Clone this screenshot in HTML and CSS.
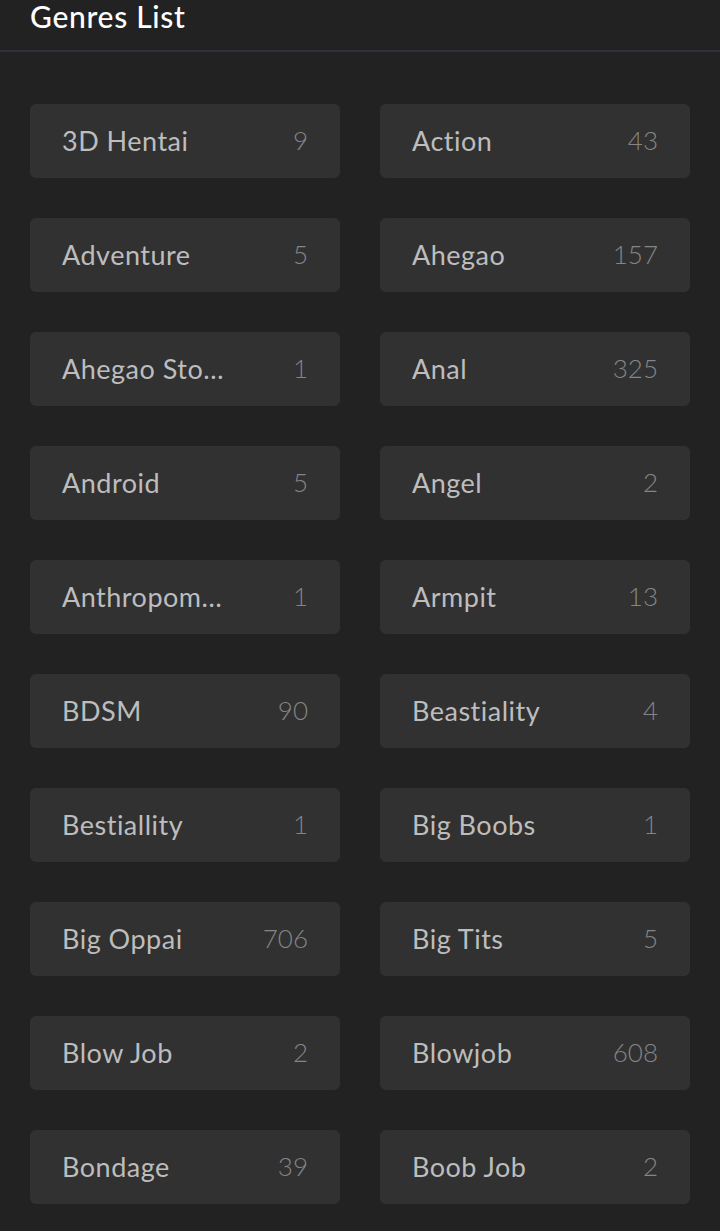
FILE: index.html
```html
<!DOCTYPE html>
<html>
<head>
<meta charset="utf-8">
<link rel="stylesheet" href="styles.css">
</head>
<body>
<header class="head"><h1 class="title">Genres List</h1></header>
<main class="grid">
  <a class="card"><span class="name">3D Hentai</span><span class="count">9</span></a>
  <a class="card"><span class="name">Action</span><span class="count">43</span></a>
  <a class="card"><span class="name">Adventure</span><span class="count">5</span></a>
  <a class="card"><span class="name">Ahegao</span><span class="count">157</span></a>
  <a class="card"><span class="name">Ahegao Stockings</span><span class="count">1</span></a>
  <a class="card"><span class="name">Anal</span><span class="count">325</span></a>
  <a class="card"><span class="name">Android</span><span class="count">5</span></a>
  <a class="card"><span class="name">Angel</span><span class="count">2</span></a>
  <a class="card"><span class="name">Anthropomorphic</span><span class="count">1</span></a>
  <a class="card"><span class="name">Armpit</span><span class="count">13</span></a>
  <a class="card"><span class="name">BDSM</span><span class="count">90</span></a>
  <a class="card"><span class="name">Beastiality</span><span class="count">4</span></a>
  <a class="card"><span class="name">Bestiallity</span><span class="count">1</span></a>
  <a class="card"><span class="name">Big Boobs</span><span class="count">1</span></a>
  <a class="card"><span class="name">Big Oppai</span><span class="count">706</span></a>
  <a class="card"><span class="name">Big Tits</span><span class="count">5</span></a>
  <a class="card"><span class="name">Blow Job</span><span class="count">2</span></a>
  <a class="card"><span class="name">Blowjob</span><span class="count">608</span></a>
  <a class="card"><span class="name">Bondage</span><span class="count">39</span></a>
  <a class="card"><span class="name">Boob Job</span><span class="count">2</span></a>
</main>
</body>
</html>
```
FILE: styles.css
```css
html, body {
  margin: 0;
  padding: 0;
  background: #222222;
  font-family: Lato, "Open Sans", sans-serif;
}
.head {
  height: 52px;
  border-bottom: 2px solid #31313a;
  box-sizing: border-box;
  padding: 0 30px;
}
.title {
  margin: 0;
  font-size: 30px;
  font-weight: 500;
  letter-spacing: 0.7px;
  color: #ffffff;
  line-height: 33px;
}
.grid {
  display: grid;
  grid-template-columns: 310px 310px;
  column-gap: 40px;
  row-gap: 40px;
  padding: 52px 30px 0;
}
.card {
  display: flex;
  align-items: center;
  justify-content: space-between;
  height: 74px;
  padding: 0 32px 2px;
  background: #313131;
  border-radius: 6px;
  box-sizing: border-box;
}
.name {
  font-size: 27px;
  letter-spacing: 0.5px;
  color: #bdbdbd;
  white-space: nowrap;
  overflow: hidden;
  text-overflow: ellipsis;
  max-width: 170px;
}
.count {
  font-size: 26px;
  font-weight: 300;
  color: #858585;
}
```
